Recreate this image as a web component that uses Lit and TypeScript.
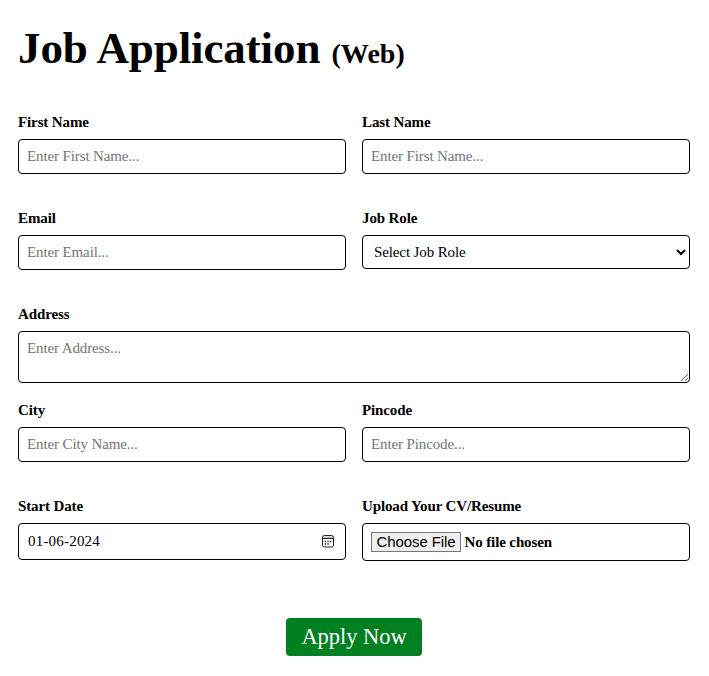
import { LitElement, html, css } from "lit";
import { customElement } from "lit/decorators.js";

@customElement("app-root")
export class AppRoot extends LitElement {
  static styles = css`
    :host { display: block; height: 676px; box-sizing: border-box; padding: 0 19px 0 18px; background: #fff; color: #000; font-family: "Liberation Serif", "Times New Roman", serif; font-size: 15px; overflow: hidden; }
    * { box-sizing: border-box; }
    h1 { margin: 0; padding-top: 22px; font-size: 45px; letter-spacing: -0.1px; line-height: 52px; height: 112px; white-space: nowrap; }
    h1 span { font-size: 28px; letter-spacing: 0.05px; }
    .grid { display: grid; grid-template-columns: 328px 328px; column-gap: 16px; grid-auto-rows: 96px; }
    .field { display: flex; flex-direction: column; min-width: 0; }
    .wide { grid-column: 1 / -1; }
    label { font-weight: bold; line-height: 20px; height: 27px; letter-spacing: -0.12px; }
    input, select, textarea, .box { display: block; width: 100%; height: 35px; margin: 0; padding: 0 8px; border: 1px solid #000; border-radius: 4px; background: #fff; color: #000; font-family: inherit; font-size: 15px; letter-spacing: -0.12px; outline: 0; }
    input::placeholder, textarea::placeholder { color: #757575; opacity: 1; }
    select { height: 34px; padding: 0 7px; }
    textarea { height: 52px; padding: 8px; line-height: 17px; }
    .box { display: flex; align-items: center; height: 37px; padding: 0 9px; }
    .date { justify-content: space-between; letter-spacing: 0.2px; }
    .date svg { display: block; margin-right: 1px; }
    .file { height: 38px; padding: 0 8px; font-weight: bold; gap: 3.5px; letter-spacing: -0.12px; }
    .choose { width: 90px; height: 20px; padding: 0; border: 1px solid #767676; background: #efefef; color: #000; font: 15px/18px "Liberation Sans", Arial, sans-serif; letter-spacing: -0.1px; white-space: nowrap; }
    .apply { display: block; width: 136px; height: 38px; margin: 26px auto 0; padding: 0; border: 0; border-radius: 4px; background: #008020; color: #fff; font-family: inherit; font-size: 22.5px; letter-spacing: -0.05px; }
  `;

  text(label: string, hint: string) {
    return html`<div class="field"><label>${label}</label><input placeholder=${hint} /></div>`;
  }

  render() {
    return html`
      <h1>Job Application <span>(Web)</span></h1>
      <div class="grid">
        ${this.text("First Name", "Enter First Name...")}
        ${this.text("Last Name", "Enter First Name...")}
        ${this.text("Email", "Enter Email...")}
        <div class="field"><label>Job Role</label><select><option>Select Job Role</option></select></div>
        <div class="field wide"><label>Address</label><textarea placeholder="Enter Address..."></textarea></div>
        ${this.text("City", "Enter City Name...")}
        ${this.text("Pincode", "Enter Pincode...")}
        <div class="field"><label>Start Date</label><div class="box date"><span>01-06-2024</span>
          <svg width="14" height="13" viewBox="0 0 14 13" fill="none" stroke="#222"><path d="M2 1.5h10v2H2z" fill="#bbb" stroke="none"/><rect x="1.5" y=".5" width="11" height="11.5" rx="1.8"/><path d="M2 3.5h10"/><path d="M6.4 6.5h1.3M9 6.5h1.3M3.8 6.5h1.3M3.8 9h1.3M6.4 9h1.3" stroke-width="1.3"/></svg>
        </div></div>
        <div class="field"><label>Upload Your CV/Resume</label><div class="box file"><button class="choose">Choose File</button><span>No file chosen</span></div></div>
      </div>
      <button class="apply">Apply Now</button>
    `;
  }
}
